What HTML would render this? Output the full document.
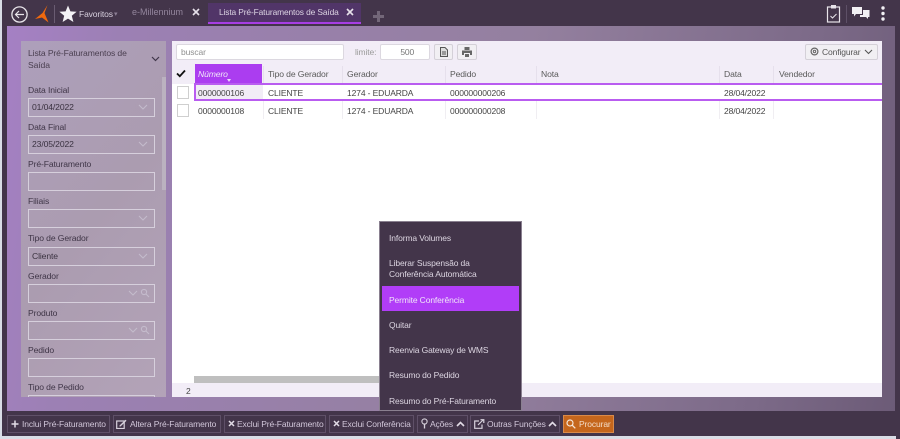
<!DOCTYPE html>
<html><head><meta charset="utf-8">
<style>
html,body{margin:0;padding:0;width:900px;height:439px;overflow:hidden;background:#43354a;font-family:"Liberation Sans",sans-serif;font-size:8.5px;letter-spacing:-.12px;color:#444}
div,span{position:absolute;white-space:nowrap;box-sizing:border-box}
svg{position:absolute}
.main{left:7px;top:26px;width:888px;height:385px;background:linear-gradient(100deg,#a580c4 0%,#9c80b4 12%,#94809f 55%,#7c6a88 85%,#6c5b77 100%)}
.side{left:21px;top:41px;width:145px;height:356px;background:linear-gradient(130deg,#ad9fbb 0%,#ab9cb0 50%,#b3a3b8 100%);overflow:hidden}
.lb{left:7px;color:#3f3547;font-size:8.6px}
.in{left:7px;width:127px;height:19px;border:1px solid #d6cfdc;color:#3a3240;padding:3px 0 0 3px;font-size:8.6px}
.hd{top:69px;color:#5a5a5a;font-size:8.6px}
.sep{top:66px;width:1px;height:18px;background:#e6e0ec}
.cell{color:#444;font-size:8.5px}
.btn{top:415px;height:18px;border:1px solid #5f5068;color:#d2c7da;font-size:8.5px;padding-top:3px}
.mi{left:389px;color:#ddd6e2;font-size:8.5px}
</style></head><body>
<div style="left:0;top:0;width:2px;height:439px;background:#d9dde6"></div>
<div style="left:0;top:436px;width:900px;height:3px;background:#d9dde6"></div>
<div style="left:896px;top:0;width:4px;height:439px;background:#43354a"></div>

<!-- top bar -->
<svg style="left:10px;top:6px" width="20" height="18" viewBox="0 0 20 18"><circle cx="9.5" cy="8.5" r="7.6" fill="none" stroke="#e8e4ea" stroke-width="1.3"/><path d="M14 8.5H5.5M9 5 5.5 8.5 9 12" fill="none" stroke="#e8e4ea" stroke-width="1.2"/></svg>
<svg style="left:35px;top:5px" width="14" height="18" viewBox="0 0 14 18"><path d="M12.5 0 7.5 8 0 14 7 12.5 13.5 17.5 10.5 10.5 9.5 8Z" fill="#f0690e"/></svg>
<div style="left:54px;top:5px;width:1px;height:18px;background:#6a5c72"></div>
<svg style="left:59px;top:5px" width="18" height="18" viewBox="0 0 18 18"><path d="M9 .5 11.4 6.4 17.6 6.8 12.8 10.8 14.4 17 9 13.6 3.6 17 5.2 10.8.4 6.8 6.6 6.4Z" fill="#f4f2f6"/></svg>
<div style="left:79px;top:9px;color:#d8d0de;font-size:8.5px">Favoritos</div>
<div style="left:114px;top:10px;color:#8d8096;font-size:7px">▾</div>
<div style="left:132px;top:7px;color:#93859c;font-size:9px;letter-spacing:0">e-Millennium</div>
<svg style="left:192px;top:8px" width="8" height="8" viewBox="0 0 8 8"><path d="M1 1 7 7M7 1 1 7" stroke="#e6e0ea" stroke-width="1.6"/></svg>
<div style="left:208px;top:3px;width:153px;height:21px;background:#513568;border-bottom:2px solid #a73fe4"></div>
<div style="left:219px;top:7px;color:#ddd5e4;font-size:8.4px">Lista Pré-Faturamentos de Saída</div>
<svg style="left:346px;top:8px" width="8" height="8" viewBox="0 0 8 8"><path d="M1 1 7 7M7 1 1 7" stroke="#e6e0ea" stroke-width="1.6"/></svg>
<svg style="left:373px;top:11px" width="11" height="11" viewBox="0 0 11 11"><path d="M5.5 0V11M0 5.5H11" stroke="#736779" stroke-width="3"/></svg>
<svg style="left:826px;top:4px" width="15" height="19" viewBox="0 0 15 19"><rect x="1.5" y="3" width="12" height="15" fill="none" stroke="#e8e4ea" stroke-width="1.2"/><rect x="5" y="1" width="5" height="3.5" fill="#e8e4ea"/><path d="M4.5 12 6.5 14 10.5 10" fill="none" stroke="#e8e4ea" stroke-width="1"/></svg>
<div style="left:846px;top:5px;width:1px;height:18px;background:#5e5067"></div>
<svg style="left:851px;top:6px" width="19" height="15" viewBox="0 0 19 15"><path d="M1 1H11V8H5L3 10.5V8H1Z" fill="#f2f0f4"/><path d="M12 4H18.5V11H17V13L15 11H9V9H12Z" fill="#f2f0f4"/></svg>
<svg style="left:880px;top:6px" width="6" height="15" viewBox="0 0 6 15"><circle cx="3" cy="2" r="1.7" fill="#f2f0f4"/><circle cx="3" cy="7.5" r="1.7" fill="#f2f0f4"/><circle cx="3" cy="13" r="1.7" fill="#f2f0f4"/></svg>

<div class="main"></div>

<!-- sidebar -->
<div class="side">
  <div class="lb" style="top:7px;white-space:normal;width:108px;line-height:11.5px;color:#4a3f50">Lista Pré-Faturamentos de Saída</div>
  <svg style="left:130px;top:15px" width="9" height="6" viewBox="0 0 9 6"><path d="M1 1 4.5 4.5 8 1" fill="none" stroke="#40364a" stroke-width="1.2"/></svg>
  <div class="lb" style="top:44px">Data Inicial</div>
  <div class="in" style="top:57px">01/04/2022</div>
  <div class="lb" style="top:81px">Data Final</div>
  <div class="in" style="top:94px">23/05/2022</div>
  <div class="lb" style="top:118px">Pré-Faturamento</div>
  <div class="in" style="top:131px"></div>
  <div class="lb" style="top:155px">Filiais</div>
  <div class="in" style="top:168px"></div>
  <div class="lb" style="top:192px">Tipo de Gerador</div>
  <div class="in" style="top:206px">Cliente</div>
  <div class="lb" style="top:230px">Gerador</div>
  <div class="in" style="top:243px"></div>
  <div class="lb" style="top:267px">Produto</div>
  <div class="in" style="top:280px"></div>
  <div class="lb" style="top:304px">Pedido</div>
  <div class="in" style="top:317px"></div>
  <div class="lb" style="top:341px">Tipo de Pedido</div>
  <div class="in" style="top:354px"></div>
  <div style="left:141px;top:36px;width:4px;height:113px;background:#bbb2c0"></div>
  <svg style="left:0;top:0" width="145" height="356" viewBox="0 0 145 356" fill="none" stroke="#c4bbcc" stroke-width="1.1">
    <path d="M118 64 122 68 126 64M118 101 122 105 126 101M118 175 122 179 126 175M118 213 122 217 126 213M108 250 112 254 116 250M108 287 112 291 116 287"/>
    <circle cx="123" cy="251" r="2.6"/><path d="M125 253 128 256"/>
    <circle cx="123" cy="288" r="2.6"/><path d="M125 290 128 293"/>
  </svg>
</div>

<!-- grid panel -->
<div style="left:172px;top:41px;width:710px;height:356px;background:#fff"></div>
<div style="left:172px;top:41px;width:710px;height:43px;background:#f2edf7"></div>
<div style="left:176px;top:44px;width:168px;height:16px;background:#fff;border:1px solid #dcd8e0;border-radius:2px;color:#8f8f8f;padding:2px 0 0 4px">buscar</div>
<div style="left:355px;top:47px;color:#9a9a9a">limite:</div>
<div style="left:380px;top:44px;width:50px;height:16px;background:#fff;border:1px solid #dcd8e0;border-radius:2px;color:#777;padding-top:2px;text-align:center">&nbsp;&nbsp;500</div>
<div style="left:434px;top:44px;width:19px;height:16px;background:#f1eff3;border:1px solid #d4d0d8;border-radius:2px"></div>
<svg style="left:440px;top:47px" width="8" height="10" viewBox="0 0 8 10"><path d="M.5.5H5L7.5 3V9.5H.5Z" fill="#ddd" stroke="#555"/><path d="M2 5H6M2 7H6" stroke="#555"/></svg>
<div style="left:457px;top:44px;width:20px;height:16px;background:#f1eff3;border:1px solid #d4d0d8;border-radius:2px"></div>
<svg style="left:462px;top:47px" width="10" height="10" viewBox="0 0 10 10"><path d="M2.5 0H7.5V3H2.5ZM0 3.5H10V8H8V6H2V8H0ZM3 7H7V10H3Z" fill="#666"/></svg>
<div style="left:805px;top:44px;width:73px;height:16px;background:#f1eff3;border:1px solid #d4d0d8;border-radius:2px"></div>
<svg style="left:810px;top:47px" width="9" height="9" viewBox="0 0 9 9"><circle cx="4.5" cy="4.5" r="3.4" fill="none" stroke="#666" stroke-width="1.2"/><circle cx="4.5" cy="4.5" r="1.2" fill="none" stroke="#666"/></svg>
<div style="left:822px;top:47px;color:#555">Configurar</div>
<svg style="left:864px;top:49px" width="9" height="6" viewBox="0 0 9 6"><path d="M1 1 4.5 4.5 8 1" fill="none" stroke="#555" stroke-width="1.1"/></svg>

<!-- header -->
<svg style="left:176px;top:69px" width="10" height="9" viewBox="0 0 10 9"><path d="M1 4.5 3.8 7.2 9 1.5" fill="none" stroke="#111" stroke-width="1.8"/></svg>
<div style="left:195px;top:64px;width:67px;height:19px;background:#ab3df0"></div>
<div style="left:198px;top:69px;color:#f0e6f8;font-style:italic;font-size:8.6px">Número</div>
<div style="left:227px;top:79px;width:0;height:0;border:2px solid transparent;border-top:3px solid #eadcf6"></div>
<div class="hd" style="left:268px">Tipo de Gerador</div>
<div class="hd" style="left:347px">Gerador</div>
<div class="hd" style="left:450px">Pedido</div>
<div class="hd" style="left:541px">Nota</div>
<div class="hd" style="left:724px">Data</div>
<div class="hd" style="left:779px">Vendedor</div>
<div class="sep" style="left:263px"></div><div class="sep" style="left:342px"></div><div class="sep" style="left:445px"></div><div class="sep" style="left:536px"></div><div class="sep" style="left:719px"></div><div class="sep" style="left:773px"></div>

<!-- rows -->
<div style="left:172px;top:84px;width:23px;height:35px;background:#fff"></div>
<div style="left:195px;top:84px;width:687px;height:17px;background:#fff"></div>
<div style="left:195px;top:85px;width:68px;height:15px;background:#f1ecf6"></div>
<div style="left:194px;top:83px;width:688px;height:2px;background:#b95cf0"></div>
<div style="left:194px;top:99px;width:688px;height:2px;background:#b95cf0"></div>
<div style="left:194px;top:83px;width:2px;height:18px;background:#b95cf0"></div>
<div style="left:177px;top:86px;width:12px;height:13px;background:#fff;border:1px solid #cfcfcf"></div>
<div style="left:177px;top:104px;width:12px;height:13px;background:#fff;border:1px solid #cfcfcf"></div>
<div class="cell" style="left:198px;top:88px">0000000106</div>
<div class="cell" style="left:268px;top:88px">CLIENTE</div>
<div class="cell" style="left:347px;top:88px">1274 - EDUARDA</div>
<div class="cell" style="left:450px;top:88px">000000000206</div>
<div class="cell" style="left:724px;top:88px">28/04/2022</div>
<div class="cell" style="left:198px;top:106px">0000000108</div>
<div class="cell" style="left:268px;top:106px">CLIENTE</div>
<div class="cell" style="left:347px;top:106px">1274 - EDUARDA</div>
<div class="cell" style="left:450px;top:106px">000000000208</div>
<div class="cell" style="left:724px;top:106px">28/04/2022</div>
<div style="left:263px;top:101px;width:1px;height:18px;background:#f0eef2"></div>
<div style="left:342px;top:101px;width:1px;height:18px;background:#f0eef2"></div>
<div style="left:445px;top:101px;width:1px;height:18px;background:#f0eef2"></div>
<div style="left:536px;top:101px;width:1px;height:18px;background:#f0eef2"></div>
<div style="left:719px;top:101px;width:1px;height:18px;background:#f0eef2"></div>
<div style="left:773px;top:101px;width:1px;height:18px;background:#f0eef2"></div>

<!-- footer of grid -->
<div style="left:194px;top:376px;width:186px;height:7px;background:#bfbfbf"></div>
<div style="left:172px;top:383px;width:710px;height:14px;background:#f2edf7"></div>
<div style="left:186px;top:386px;color:#444;font-size:8.5px">2</div>

<!-- popup menu -->
<div style="left:379px;top:221px;width:143px;height:190px;background:#43354a;border:1px solid #8a8090"></div>
<div style="left:382px;top:286px;width:137px;height:25px;background:#b13df8"></div>
<div class="mi" style="top:233px">Informa Volumes</div>
<div class="mi" style="top:258px">Liberar Suspensão da</div>
<div class="mi" style="top:269px">Conferência Automática</div>
<div class="mi" style="top:295px;color:#f0e4f8">Permite Conferência</div>
<div class="mi" style="top:320px">Quitar</div>
<div class="mi" style="top:345px">Reenvia Gateway de WMS</div>
<div class="mi" style="top:370px">Resumo do Pedido</div>
<div class="mi" style="top:396px">Resumo do Pré-Faturamento</div>

<!-- bottom buttons -->
<div class="btn" style="left:7px;width:103px;padding-left:14px">Inclui Pré-Faturamento</div>
<svg style="left:11px;top:420px" width="8" height="8" viewBox="0 0 8 8"><path d="M4 .5V7.5M.5 4H7.5" stroke="#e2dce6" stroke-width="1.5"/></svg>
<div class="btn" style="left:113px;width:108px;padding-left:16px">Altera Pré-Faturamento</div>
<svg style="left:116px;top:419px" width="11" height="10" viewBox="0 0 11 10"><rect x=".7" y="2" width="7.5" height="7.5" fill="none" stroke="#d8d2dc" stroke-width="1.2"/><path d="M3.5 6.5 9.5.8 10.5 1.8 4.5 7.5H3.5Z" fill="#d8d2dc"/></svg>
<div class="btn" style="left:224px;width:102px;padding-left:12px">Exclui Pré-Faturamento</div>
<svg style="left:228px;top:420px" width="7" height="7" viewBox="0 0 7 7"><path d="M1 1 6 6M6 1 1 6" stroke="#e2dce6" stroke-width="1.5"/></svg>
<div class="btn" style="left:329px;width:85px;padding-left:12px">Exclui Conferência</div>
<svg style="left:333px;top:420px" width="7" height="7" viewBox="0 0 7 7"><path d="M1 1 6 6M6 1 1 6" stroke="#e2dce6" stroke-width="1.5"/></svg>
<div class="btn" style="left:417px;width:51px;padding-left:12px">Ações</div>
<svg style="left:421px;top:418px" width="7" height="11" viewBox="0 0 7 11"><circle cx="3.5" cy="3.5" r="2.6" fill="none" stroke="#d8d2dc" stroke-width="1.1"/><path d="M3.5 6V10.5" stroke="#d8d2dc" stroke-width="1.3"/></svg>
<svg style="left:456px;top:421px" width="9" height="6" viewBox="0 0 9 6"><path d="M1 5 4.5 1.5 8 5" fill="none" stroke="#e2dce6" stroke-width="1.6"/></svg>
<div class="btn" style="left:470px;width:90px;padding-left:16px">Outras Funções</div>
<svg style="left:474px;top:419px" width="11" height="10" viewBox="0 0 11 10"><path d="M5 2H.7V9.3H8V5.5" fill="none" stroke="#d8d2dc" stroke-width="1.2"/><path d="M4 6 9 1M6.5 .7H9.8V4" fill="none" stroke="#d8d2dc" stroke-width="1.2"/></svg>
<svg style="left:548px;top:421px" width="9" height="6" viewBox="0 0 9 6"><path d="M1 5 4.5 1.5 8 5" fill="none" stroke="#e2dce6" stroke-width="1.6"/></svg>
<div class="btn" style="left:563px;width:51px;padding-left:15px;background:#c5661c;border-color:#d98a4a;color:#f3dcc8">Procurar</div>
<svg style="left:566px;top:419px" width="10" height="10" viewBox="0 0 10 10"><circle cx="4" cy="4" r="3" fill="none" stroke="#f5e6d8" stroke-width="1.2"/><path d="M6.2 6.2 9.3 9.3" stroke="#f5e6d8" stroke-width="1.3"/></svg>
</body></html>
